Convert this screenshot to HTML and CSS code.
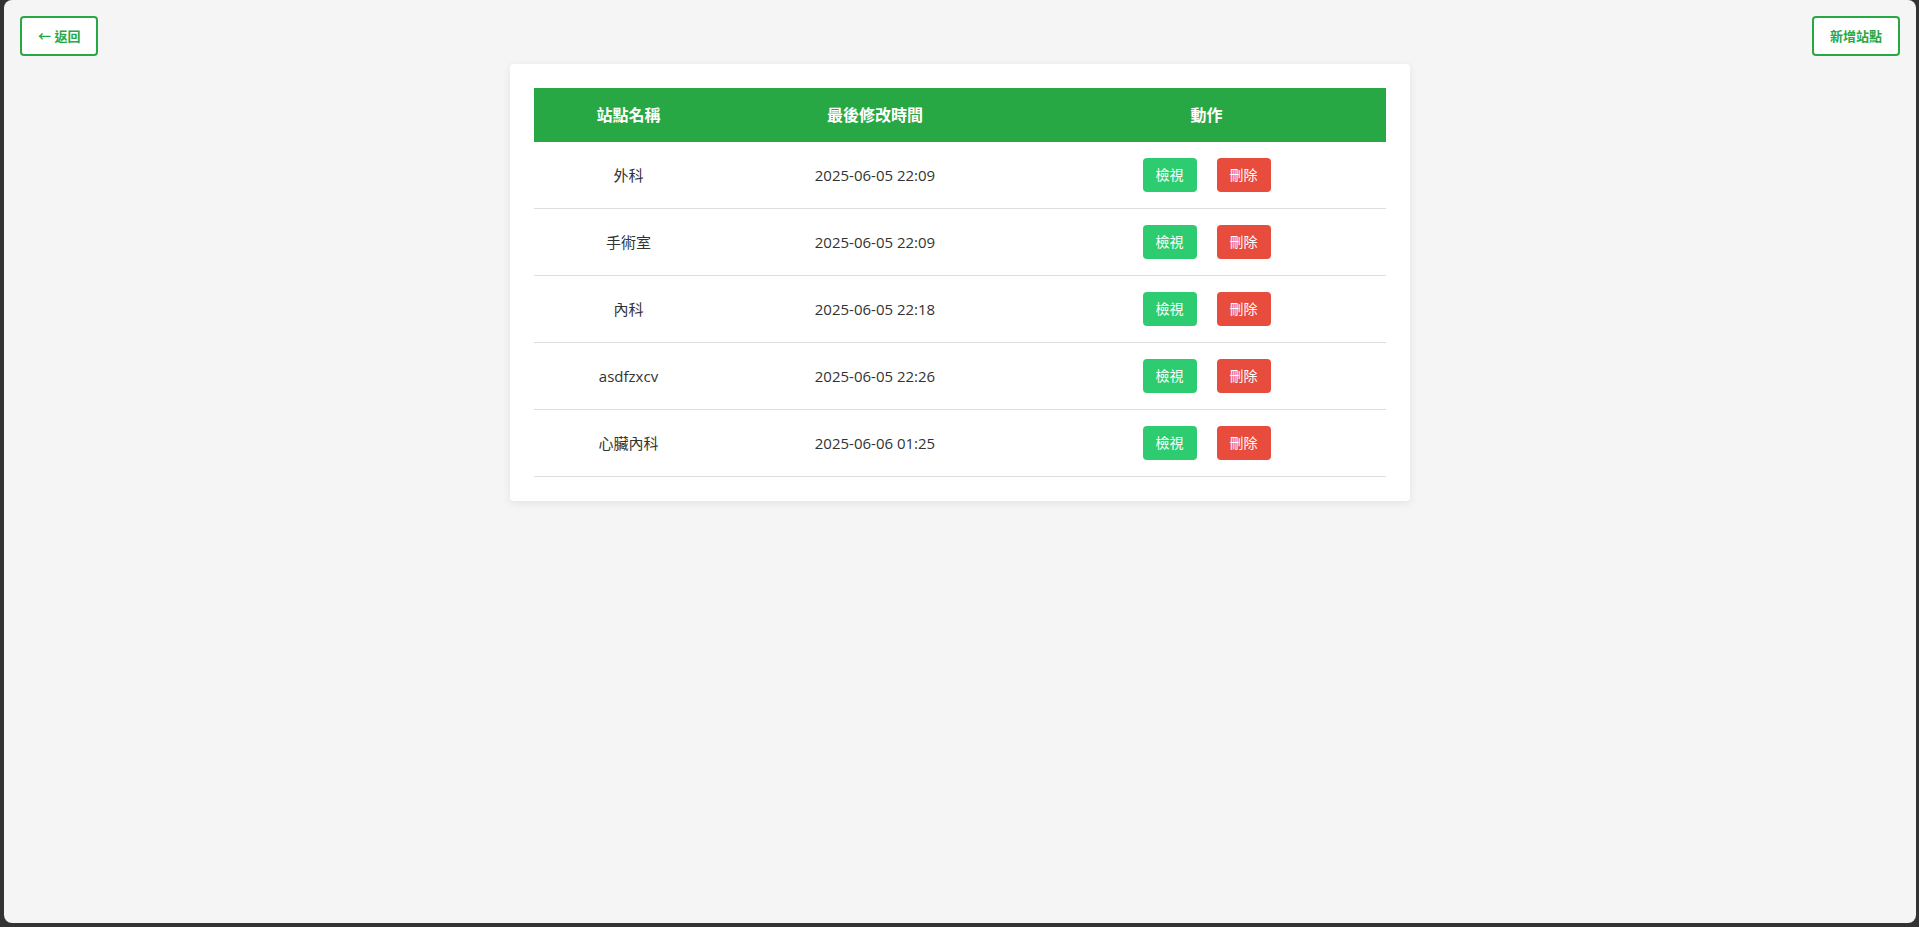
FILE: index.html
```html
<!DOCTYPE html>
<html lang="zh-Hant">
<head>
<meta charset="utf-8">
<title>站點管理</title>
<link rel="stylesheet" href="styles.css">
</head>
<body>
<div class="app">
  <div class="topbar">
    <button class="outline-btn">← 返回</button>
    <button class="outline-btn">新增站點</button>
  </div>
  <div class="card">
    <table class="site-table">
      <thead>
        <tr>
          <th class="col-name">站點名稱</th>
          <th class="col-time">最後修改時間</th>
          <th class="col-action">動作</th>
        </tr>
      </thead>
      <tbody>
        <tr>
          <td>外科</td>
          <td>2025-06-05 22:09</td>
          <td><div class="actions"><button class="btn btn-view">檢視</button><button class="btn btn-delete">刪除</button></div></td>
        </tr>
        <tr>
          <td>手術室</td>
          <td>2025-06-05 22:09</td>
          <td><div class="actions"><button class="btn btn-view">檢視</button><button class="btn btn-delete">刪除</button></div></td>
        </tr>
        <tr>
          <td>內科</td>
          <td>2025-06-05 22:18</td>
          <td><div class="actions"><button class="btn btn-view">檢視</button><button class="btn btn-delete">刪除</button></div></td>
        </tr>
        <tr>
          <td>asdfzxcv</td>
          <td>2025-06-05 22:26</td>
          <td><div class="actions"><button class="btn btn-view">檢視</button><button class="btn btn-delete">刪除</button></div></td>
        </tr>
        <tr>
          <td>心臟內科</td>
          <td>2025-06-06 01:25</td>
          <td><div class="actions"><button class="btn btn-view">檢視</button><button class="btn btn-delete">刪除</button></div></td>
        </tr>
      </tbody>
    </table>
  </div>
</div>
</body>
</html>
```

FILE: styles.css
```css
* {
  box-sizing: border-box;
}

html, body {
  margin: 0;
  padding: 0;
  height: 100%;
}

body {
  background: #333333;
  font-family: "Open Sans", "Noto Sans CJK TC", sans-serif;
  color: #333333;
}

.app {
  height: calc(100vh - 4px);
  margin: 0 3px 0 4px;
  background: #f5f5f5;
  border-radius: 8px;
  padding: 16px;
  overflow: hidden;
}

.topbar {
  display: flex;
  justify-content: space-between;
  align-items: flex-start;
}

.outline-btn {
  font-family: "Open Sans", "Noto Sans CJK TC", sans-serif;
  font-size: 13px;
  font-weight: 700;
  line-height: 20px;
  color: #28a745;
  background: #ffffff;
  border: 2px solid #28a745;
  border-radius: 4px;
  padding: 8px 16px;
  margin: 0;
  cursor: pointer;
}

.card {
  width: 900px;
  margin: 8px auto 0;
  background: #ffffff;
  border-radius: 4px;
  box-shadow: 0 2px 8px rgba(0, 0, 0, 0.08);
  padding: 24px;
}

.site-table {
  width: 100%;
  border-collapse: collapse;
  table-layout: fixed;
}

.site-table th {
  background: #28a745;
  color: #ffffff;
  font-size: 16px;
  font-weight: 700;
  line-height: 22px;
  padding: 16px 8px;
  text-align: center;
}

.col-name {
  width: 189px;
}

.col-time {
  width: 304px;
}

.site-table td {
  font-size: 15px;
  line-height: 34px;
  padding: 16px 8px;
  text-align: center;
  border-bottom: 1px solid #dddddd;
  color: #333333;
}

.actions {
  display: flex;
  justify-content: center;
  gap: 20px;
}

.btn {
  font-family: "Open Sans", "Noto Sans CJK TC", sans-serif;
  font-size: 14px;
  line-height: 34px;
  height: 34px;
  padding: 0 13px;
  border: none;
  border-radius: 4px;
  color: #ffffff;
  margin: 0;
  cursor: pointer;
}

.btn-view {
  background: #2ecc71;
}

.btn-delete {
  background: #e74c3c;
}
```
